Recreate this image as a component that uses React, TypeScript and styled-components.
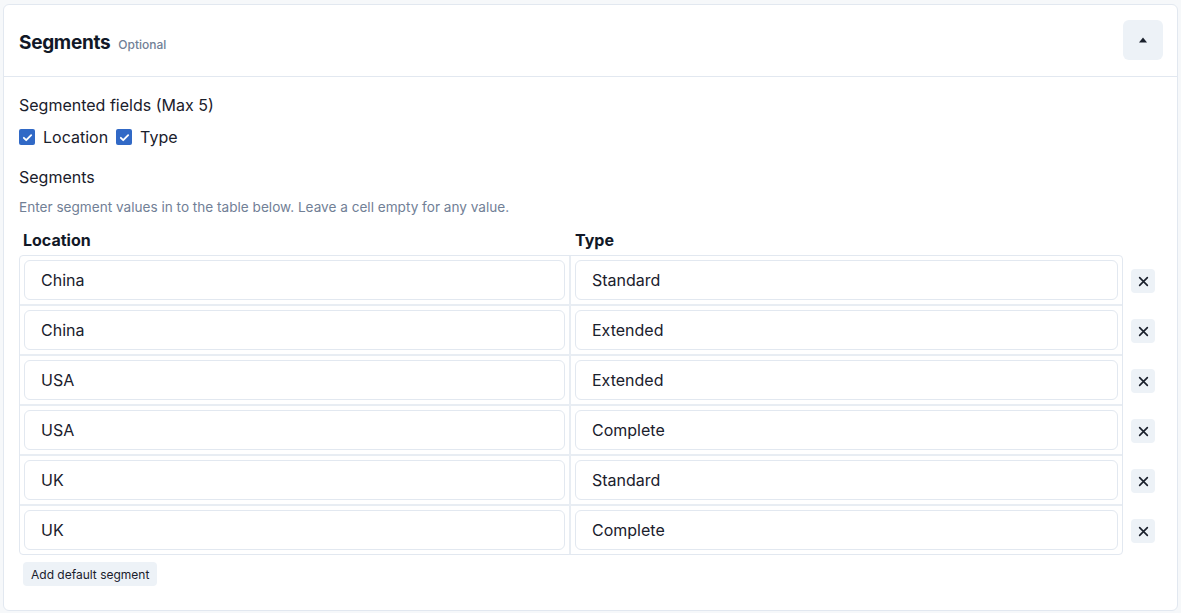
import styled, { createGlobalStyle } from "styled-components";

const GlobalStyle = createGlobalStyle`
  * { box-sizing: border-box; }
  body {
    margin: 0;
    background: #f6f8fa;
    font-family: Inter, "Noto Sans", sans-serif;
    color: #111827;
  }
`;

const Page = styled.div`
  padding: 4px 3px 1px 3px;
`;

const Card = styled.section`
  background: #fff;
  border: 1px solid #e2e8f0;
  border-radius: 6px;
`;

const Header = styled.header`
  height: 72px;
  display: flex;
  align-items: center;
  justify-content: space-between;
  padding: 0 14px 0 15px;
  border-bottom: 1px solid #e2e8f0;
`;

const TitleRow = styled.div`
  display: flex;
  align-items: baseline;
  gap: 8px;
  padding-top: 4px;
`;

const Title = styled.h2`
  margin: 0;
  font-size: 19px;
  font-weight: 700;
  letter-spacing: -0.3px;
`;

const Optional = styled.span`
  font-size: 12px;
  font-weight: 500;
  color: #718096;
`;

const Toggle = styled.button`
  width: 40px;
  height: 40px;
  border: none;
  border-radius: 6px;
  background: #edf2f7;
  display: flex;
  align-items: center;
  justify-content: center;
  padding: 0;
  margin-top: -1px;
  cursor: pointer;
`;

const Body = styled.div`
  padding: 16px 15px 24px 15px;
`;

const Label = styled.div`
  font-size: 16px;
  font-weight: 400;
  line-height: 24px;
  color: #1a202c;
`;

const CheckRow = styled.div`
  display: flex;
  align-items: center;
  gap: 8px;
  margin-top: 8px;
  height: 24px;
`;

const CheckItem = styled.label`
  display: flex;
  align-items: center;
  gap: 8px;
  font-size: 16px;
  color: #1a202c;
`;

const Box = styled.span`
  width: 16px;
  height: 16px;
  border-radius: 2px;
  background: #3169c6;
  display: flex;
  align-items: center;
  justify-content: center;
`;

const SectionLabel = styled(Label)`
  margin-top: 16px;
`;

const Hint = styled.p`
  margin: 8px 0 0;
  font-size: 13.6px;
  color: #718096;
  line-height: 20px;
`;

const Grid = styled.div`
  margin-top: 11px;
  display: grid;
  grid-template-columns: 1104px 32px;
`;

const HeadRow = styled.div`
  display: grid;
  grid-template-columns: 552px 552px;
  padding-left: 4px;
  height: 27px;
  line-height: 24px;
`;

const HeadCell = styled.div`
  font-size: 16px;
  font-weight: 700;
`;

const Table = styled.div`
  border: 1px solid #e2e8f0;
  border-radius: 4px;
`;

const Row = styled.div<{ $last?: boolean }>`
  display: grid;
  grid-template-columns: 1fr 1fr;
  height: ${p => (p.$last ? "48px" : "50px")};
  border-bottom: ${p => (p.$last ? "none" : "2px solid #e8edf3")};
`;

const Cell = styled.div<{ $first?: boolean }>`
  padding: 4px;
  border-right: ${p => (p.$first ? "2px solid #e8edf3" : "none")};
`;

const Input = styled.input`
  width: 100%;
  height: 40px;
  border: 1px solid #e2e8f0;
  border-radius: 6px;
  padding: 0 16px;
  font-family: inherit;
  font-size: 16px;
  color: #1a202c;
  outline: none;
`;

const Actions = styled.div`
  padding-top: 28px;
  display: flex;
  flex-direction: column;
`;

const ActionSlot = styled.div`
  height: 50px;
  display: flex;
  align-items: center;
  justify-content: flex-end;
`;

const RemoveBtn = styled.button`
  width: 24px;
  height: 24px;
  border: none;
  border-radius: 4px;
  background: #edf2f7;
  display: flex;
  align-items: center;
  justify-content: center;
  padding: 0;
  cursor: pointer;
`;

const AddBtn = styled.button`
  margin: 6px 0 0 4px;
  height: 24px;
  border: none;
  border-radius: 4px;
  background: #edf2f7;
  font-family: inherit;
  font-size: 12px;
  font-weight: 400;
  color: #1a202c;
  padding: 0 8px;
  cursor: pointer;
`;

const Check = () => (
  <svg width="11" height="11" viewBox="0 0 12 12">
    <path d="M2 6.3l2.6 2.6L10 3.4" fill="none" stroke="#fff" strokeWidth="2" strokeLinecap="round" strokeLinejoin="round" />
  </svg>
);

const Cross = () => (
  <svg width="11" height="11" viewBox="0 0 10 10">
    <path d="M1.5 1.5l7 7M8.5 1.5l-7 7" stroke="#1a202c" strokeWidth="1.5" strokeLinecap="round" />
  </svg>
);

const rows = [
  ["China", "Standard"],
  ["China", "Extended"],
  ["USA", "Extended"],
  ["USA", "Complete"],
  ["UK", "Standard"],
  ["UK", "Complete"],
];

export default function App() {
  return (
    <Page>
      <GlobalStyle />
      <Card>
        <Header>
          <TitleRow>
            <Title>Segments</Title>
            <Optional>Optional</Optional>
          </TitleRow>
          <Toggle aria-label="Collapse">
            <svg width="10" height="6" viewBox="0 0 10 6">
              <path d="M5 0.5L9 5.5H1z" fill="#1a202c" />
            </svg>
          </Toggle>
        </Header>
        <Body>
          <Label>Segmented fields (Max 5)</Label>
          <CheckRow>
            <CheckItem>
              <Box><Check /></Box>
              Location
            </CheckItem>
            <CheckItem>
              <Box><Check /></Box>
              Type
            </CheckItem>
          </CheckRow>
          <SectionLabel>Segments</SectionLabel>
          <Hint>Enter segment values in to the table below. Leave a cell empty for any value.</Hint>
          <Grid>
            <div>
              <HeadRow>
                <HeadCell>Location</HeadCell>
                <HeadCell>Type</HeadCell>
              </HeadRow>
              <Table>
                {rows.map(([loc, type], i) => (
                  <Row key={i} $last={i === rows.length - 1}>
                    <Cell $first>
                      <Input defaultValue={loc} />
                    </Cell>
                    <Cell>
                      <Input defaultValue={type} />
                    </Cell>
                  </Row>
                ))}
              </Table>
            </div>
            <Actions>
              {rows.map((_, i) => (
                <ActionSlot key={i}>
                  <RemoveBtn aria-label="Remove">
                    <Cross />
                  </RemoveBtn>
                </ActionSlot>
              ))}
            </Actions>
          </Grid>
          <AddBtn>Add default segment</AddBtn>
        </Body>
      </Card>
    </Page>
  );
}
